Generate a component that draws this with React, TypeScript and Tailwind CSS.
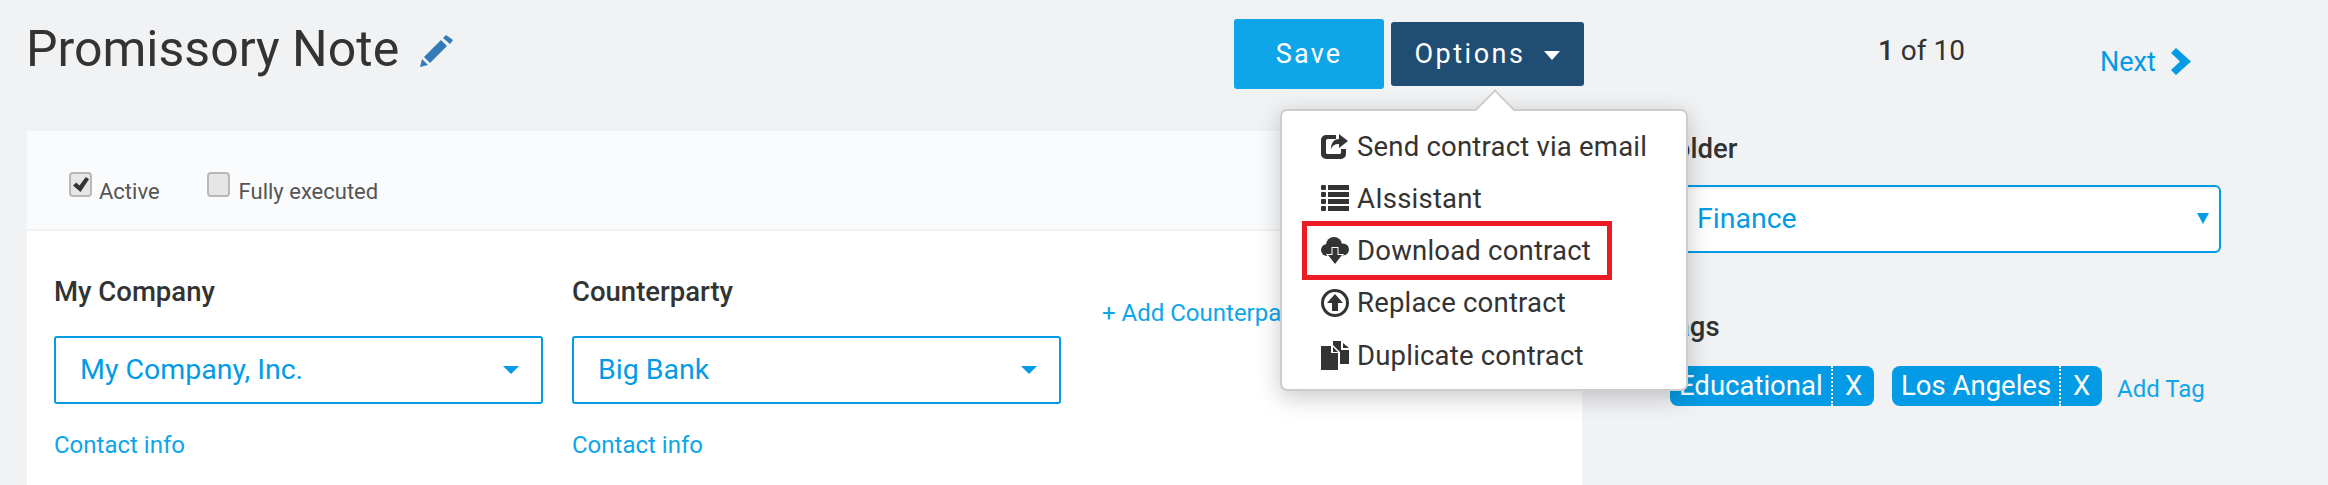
function Caret({ className }: { className: string }) {
  return (
    <svg viewBox="0 0 14 10" preserveAspectRatio="none" className={className} fill="currentColor">
      <path d="M0 0h14L7 10z" />
    </svg>
  );
}

function PencilIcon() {
  return (
    <svg viewBox="0 0 33 32" className="w-[33px] h-[32px] mt-[4px]" fill="#337ab7">
      <path d="M0 32l2-8 6 6z" />
      <path d="M4 22L21 5l6 6-17 17z" />
      <path d="M23 3l3-3 7 5-3 4z" />
    </svg>
  );
}

function ChevronIcon() {
  return (
    <svg viewBox="0 0 20 27" className="w-[20px] h-[27px] -mt-[2px]" fill="currentColor">
      <path d="M5 0l15 13.5L5 27l-5-5 9-8.5-9-8.5z" />
    </svg>
  );
}

function ShareIcon() {
  return (
    <svg viewBox="0 0 27 25" className="w-[27px] h-[25px]" fill="#333333">
      <path d="M5 1h10v4H6.5A1.5 1.5 0 0 0 5 6.500v12A1.500 1.500 0 0 0 6.500 20h12a1.500 1.500 0 0 0 1.500-1.500V15h5v5a5 5 0 0 1-5 5H5a5 5 0 0 1-5-5V6a5 5 0 0 1 5-5z" />
      <path d="M18 0l9 7-9 7v-4c-4 0-6 1-8 5 0-6 3-10 8-10z" />
    </svg>
  );
}

function ListIcon() {
  return (
    <svg viewBox="0 0 28 26" className="w-[28px] h-[26px]" fill="#333333">
      <rect x="0" y="0" width="5" height="5" rx="1" />
      <rect x="7" y="0" width="21" height="5" />
      <rect x="0" y="7" width="5" height="5" rx="1" />
      <rect x="7" y="7" width="21" height="5" />
      <rect x="0" y="14" width="5" height="5" rx="1" />
      <rect x="7" y="14" width="21" height="5" />
      <rect x="0" y="21" width="5" height="5" rx="1" />
      <rect x="7" y="21" width="21" height="5" />
    </svg>
  );
}

function CloudIcon() {
  return (
    <svg viewBox="0 0 28 27" className="w-[28px] h-[27px]" fill="#333333">
      <circle cx="13" cy="8" r="8" />
      <circle cx="22" cy="12.500" r="6" />
      <circle cx="6" cy="13" r="6" />
      <rect x="6" y="10" width="16" height="9" />
      <path d="M11.500 11h5v7H21l-7 9-7-9h4.500z" stroke="#ffffff" strokeWidth="2" paintOrder="stroke" />
    </svg>
  );
}

function ReplaceIcon() {
  return (
    <svg viewBox="0 0 28 28" className="w-[28px] h-[28px]" fill="#333333">
      <path fillRule="evenodd" d="M14 0a14 14 0 1 1 0 28a14 14 0 0 1 0-28zm0 3a11 11 0 1 0 0 22a11 11 0 0 0 0-22z" />
      <path d="M14 5l8 9h-5v8h-6v-8H6z" />
    </svg>
  );
}

function DuplicateIcon() {
  return (
    <svg viewBox="0 0 28 29" className="w-[28px] h-[29px]" fill="#333333">
      <path d="M0 5h10v7h7v17H0z" />
      <path d="M12 6l5 5h-5z" />
      <path d="M12 0h8v9h8v14h-9V11l-7-7z" />
      <path d="M22 2l6 5h-6z" />
    </svg>
  );
}

function CheckBox({ checked }: { checked?: boolean }) {
  return (
    <span className="w-[23px] h-[25px] bg-[#e6e6e6] border-2 border-[#b8b8b8] rounded-[4px] flex items-center justify-center">
      {checked && (
        <svg viewBox="0 0 16 16" className="w-[17px] h-[17px]" fill="#333333">
          <path d="M1 9l3-3 3 3 6-8 3 2-8 12z" />
        </svg>
      )}
    </span>
  );
}

const menuItems = [
  { label: "Send contract via email", icon: <ShareIcon /> },
  { label: "AIssistant", icon: <ListIcon /> },
  { label: "Download contract", icon: <CloudIcon /> },
  { label: "Replace contract", icon: <ReplaceIcon /> },
  { label: "Duplicate contract", icon: <DuplicateIcon /> },
];

function SelectBox({ value }: { value: string }) {
  return (
    <div className="w-[489px] h-[68px] bg-white border-2 border-[#039be5] rounded-[3px] pl-[24px] pr-[22px] flex items-center justify-between text-[#039be5] text-[28.500px]">
      <span>{value}</span>
      <Caret className="w-[16px] h-[8px]" />
    </div>
  );
}

function Tag({ label, className }: { label: string; className: string }) {
  return (
    <span className={`${className} h-[40px] bg-[#039be5] text-white rounded-[8px] flex items-center text-[27.500px] leading-none`}>
      <span className="flex-1 pl-[9px] border-r-2 border-dotted border-white h-full flex items-center whitespace-nowrap">{label}</span>
      <span className="w-[41px] text-center">X</span>
    </span>
  );
}

export default function App() {
  return (
    <div className="relative w-[2328px] h-[485px] overflow-hidden bg-[#f1f2f4] font-['Roboto',sans-serif] text-[#333333]">
      {/* Top row */}
      <header className="h-[131px] flex items-start">
        <div className="w-[1234px] pl-[26px] pt-[17px] flex items-center gap-[21px]">
          <h1 className="text-[50px] leading-[64px] font-normal">Promissory Note</h1>
          <PencilIcon />
        </div>
        <button className="mt-[19px] w-[150px] h-[70px] bg-[#0ea5e9] rounded-[3px] text-white text-[27px] tracking-[2.200px]">Save</button>
        <button className="mt-[22px] ml-[7px] w-[193px] h-[64px] bg-[#204d74] rounded-[3px] text-white text-[27px] tracking-[2.500px] flex items-center justify-center gap-[19px]">
          Options
          <Caret className="w-[16px] h-[9px] mt-[2px]" />
        </button>
        <div className="ml-[294px] mt-[35px] text-[28px] leading-[32px]"><span className="font-medium">1</span> of 10</div>
        <a className="ml-[135px] mt-[46px] flex items-center gap-[15px] text-[#039be5] text-[27px] leading-[32px]">
          Next
          <ChevronIcon />
        </a>
      </header>

      {/* Body */}
      <div className="flex pl-[27px]">
        <main className="w-[1555px] h-[354px] bg-white">
          <div className="h-[100px] bg-[#fafbfc] border-b-2 border-[#f1f2f4] pl-[42px] pt-[41px] flex items-start gap-[47px] text-[22px] text-[#555]">
            <label className="flex items-start gap-[7px]">
              <CheckBox checked />
              <span className="mt-[3px]">Active</span>
            </label>
            <label className="flex items-start gap-[9px]">
              <CheckBox />
              <span className="mt-[3px]">Fully executed</span>
            </label>
          </div>
          <div className="flex pl-[27px] pt-[43px] gap-[29px]">
            <div>
              <div className="text-[27.500px] leading-[36px] font-medium">My Company</div>
              <div className="mt-[26px]"><SelectBox value="My Company, Inc." /></div>
              <a className="block mt-[26px] text-[24px] leading-[30px] text-[#0ea5e9]">Contact info</a>
            </div>
            <div>
              <div className="text-[27.500px] leading-[36px] font-medium">Counterparty</div>
              <div className="mt-[26px]"><SelectBox value="Big Bank" /></div>
              <a className="block mt-[26px] text-[24px] leading-[30px] text-[#0ea5e9]">Contact info</a>
            </div>
            <a className="ml-[12px] mt-[24px] text-[24px] leading-[30px] text-[#0ea5e9] whitespace-nowrap">+ Add Counterparty</a>
          </div>
        </main>

        <aside className="ml-[88px] w-[551px]">
          <div className="text-[27.500px] leading-[36px] font-medium -ml-[10px]">Folder</div>
          <div className="mt-[18px] h-[68px] bg-white border-2 border-[#039be5] rounded-[6px] pl-[25px] pr-[10px] flex items-center justify-between text-[#039be5] text-[28.500px] shadow-[inset_0_2px_2px_rgba(0,0,0,0.05)]">
            <span>Finance</span>
            <Caret className="w-[12px] h-[11px] -mt-[2px]" />
          </div>
          <div className="mt-[56px] -ml-[10px] text-[27.500px] leading-[36px] font-medium">Tags</div>
          <div className="mt-[20px] flex items-center gap-[18px] w-[600px]">
            <Tag label="Educational" className="w-[204px]" />
            <Tag label="Los Angeles" className="w-[210px]" />
            <a className="-ml-[3px] mt-[6px] text-[24px] text-[#0ea5e9] whitespace-nowrap">Add Tag</a>
          </div>
        </aside>
      </div>

      {/* Options menu */}
      <div className="absolute left-[1280px] top-[109px] w-[408px] h-[282px] bg-white border-2 border-[#cccccc] rounded-[7px] shadow-[0_6px_24px_rgba(0,0,0,0.22)] pl-[39px] pt-[9px]">
        <div className="absolute left-[199px] -top-[16px] w-[28px] h-[28px] rotate-45 bg-white border-l-2 border-t-2 border-[#cccccc]" />
        <ul className="relative">
          {menuItems.map((item) => (
            <li key={item.label} className="h-[52.300px] flex items-center text-[27.500px] tracking-[0.2px]">
              <span className="w-[36px] flex justify-start">{item.icon}</span>
              {item.label}
            </li>
          ))}
        </ul>
      </div>

      {/* Highlight */}
      <div className="absolute left-[1302px] top-[221px] w-[310px] h-[59px] border-[5px] border-[#ed1c24]" />
    </div>
  );
}
